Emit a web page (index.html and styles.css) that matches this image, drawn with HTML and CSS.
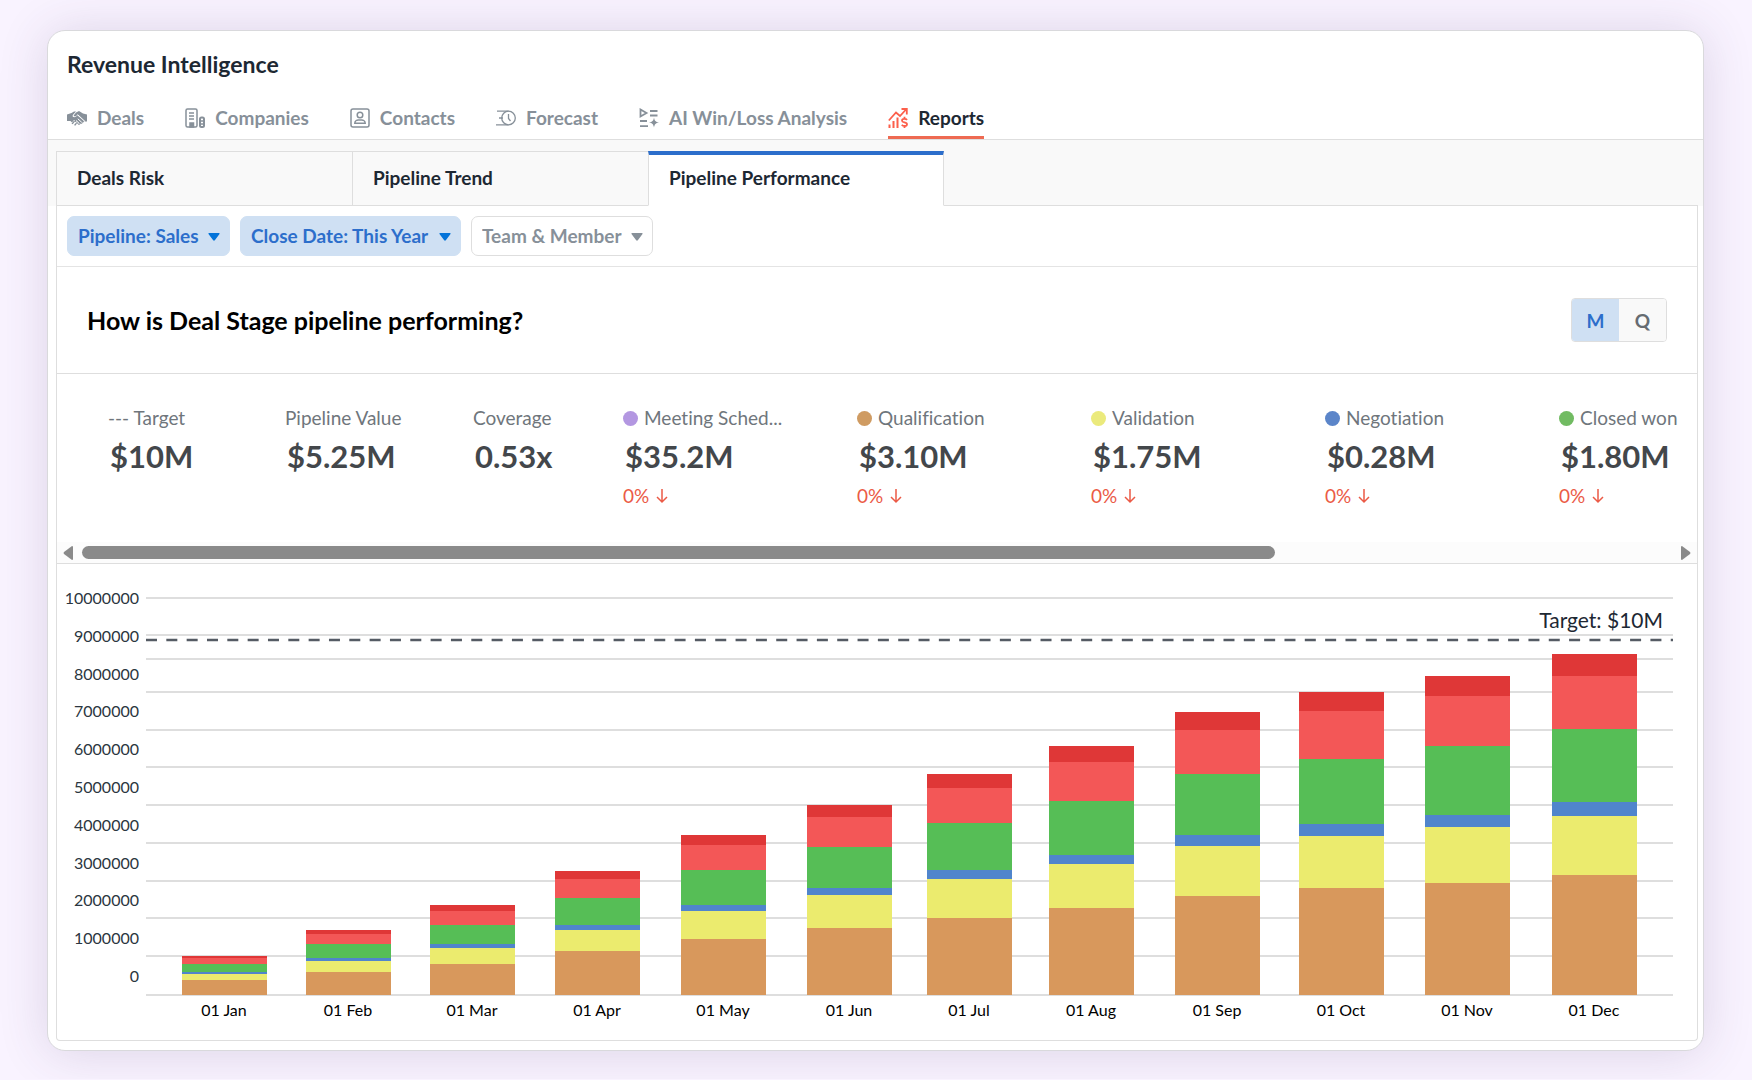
FILE: index.html
```html
<!DOCTYPE html>
<html lang="en">
<head>
	<meta charset="UTF-8">
	<meta name="viewport" content="width=device-width, initial-scale=1.0">
	<title>Revenue Intelligence</title>
	<link rel="stylesheet" href="styles.css">
</head>
<body>
	<main class="card">
		<header class="header">
			<h1>Revenue Intelligence</h1>
			<nav class="nav">
				<a href="#deals">
					<svg class="icon" viewBox="0 0 20 20">
						<path fill="currentColor" d="M0 6.500 4.500 5 7 3.500h2L5.800 7c-.8 1.800 1.200 3 2.800 1.800l2-1.300 6 5.200c.9 1-.2 2.200-1.300 1.500.5 1.200-.8 2.200-2 1.300.1 1.200-1.300 1.800-2.300.9L7.500 13 5 14.500 3.500 13H0z"/>
						<path fill="currentColor" d="m9 4.500 3-1.500 4 2.500 4 1v7h-2.500L11 7 8.200 8.200c-1.200.4-1.800-.4-1.200-1.200z"/>
						<path stroke="#fff" d="m5 15 2.500-3M7.200 16.500l2.300-2.800M9.500 17.500l1.500-2M10.800 10.800l4 3.600M9 12.500l3.500 3.200M10.500 6.500l7.500 7"/>
						<path fill="currentColor" d="M4.500 15.500 7 12.800l1 .8-2.300 2.700zM7 17l2-2.200 1 .8-1.800 2.100z"/>
					</svg>
					Deals
				</a>
				<a href="#companies">
					<svg class="icon" viewBox="0 0 20 20" fill="none" stroke="currentColor" stroke-width="1.500">
						<rect x="1" y="1" width="11" height="18" rx="1.500"/>
						<path d="M4 5h5M4 8h5M4 11h5"/>
						<path fill="currentColor" d="M5 15h3.500v4H5z"/>
						<rect x="15" y="9.500" width="4" height="9.500" rx="1.500" stroke-width="2"/>
						<path d="M15 13h4M15 16h4"/>
					</svg>
					Companies
				</a>
				<a href="#contacts">
					<svg class="icon" viewBox="0 0 20 20" fill="none" stroke="currentColor" stroke-width="1.500">
						<rect x="1" y="1" width="18" height="18" rx="2"/>
						<circle cx="10" cy="7" r="2.800"/>
						<path d="M4.800 15.200c0-2.200 2-3.200 3.500-3.200h3.400c1.500 0 3.500 1 3.500 3.200z"/>
					</svg>
					Contacts
				</a>
				<a href="#forecast">
					<svg class="icon" viewBox="0 0 20 20" fill="none" stroke="currentColor" stroke-width="1.300">
						<circle cx="12.500" cy="10" r="6.800"/>
						<path d="M1 3.200h11.500M3 10h4M0 16.800h12.500M12.500 6v4.500l2 2.500"/>
					</svg>
					Forecast
				</a>
				<a href="#analysis">
					<svg class="icon" viewBox="0 0 20 20" fill="none" stroke="currentColor" stroke-width="1.800">
						<path d="M1.500 1.500v7l6-3.500zM11 3h7.500M11 7.500h7.500M1 13h7M1 18.200h8"/>
						<path fill="currentColor" stroke="none" d="M15 9.500c.7 3.500 1.500 4.400 5 5-3.500.7-4.300 1.600-5 5-.7-3.400-1.500-4.300-5-5 3.500-.6 4.300-1.500 5-5z"/>
					</svg>
					AI Win/Loss Analysis
				</a>
				<a href="#reports" class="active">
					<svg class="icon" viewBox="0 0 20 20" fill="none" stroke="currentColor" stroke-width="1.800">
						<path d="m.8 12.500 7.200-8 4 3.500 6-6.500M13.500 1h5.300v5.500"/>
						<path stroke-width="2" d="M1.500 16.500V20M5.500 13v7M9.500 9.500V20"/>
						<path d="M19 12c-1-1.500-5-1.500-5 .7s5 1.200 5 3.500-4 2.300-5.200.5M16.500 8.800v2M16.500 18v2.200"/>
					</svg>
					Reports
				</a>
			</nav>
		</header>

		<div class="tabs">
			<button type="button" class="tab">Deals Risk</button>
			<button type="button" class="tab">Pipeline Trend</button>
			<button type="button" class="tab selected">Pipeline Performance</button>
		</div>

		<div class="panel">
			<div class="filters">
				<div class="filter on">
					<select aria-label="Pipeline"><option>Pipeline: Sales</option></select>
					<svg class="caret" viewBox="0 0 12 8"><path fill="currentColor" d="M1 0h10q1 0 .5 1L7 7q-1 1.500-2 0L.5 1Q0 0 1 0z"/></svg>
				</div>
				<div class="filter on">
					<select aria-label="Close date"><option>Close Date: This Year</option></select>
					<svg class="caret" viewBox="0 0 12 8"><path fill="currentColor" d="M1 0h10q1 0 .5 1L7 7q-1 1.500-2 0L.5 1Q0 0 1 0z"/></svg>
				</div>
				<div class="filter">
					<select aria-label="Team and member"><option>Team &amp; Member</option></select>
					<svg class="caret" viewBox="0 0 12 8"><path fill="currentColor" d="M1 0h10q1 0 .5 1L7 7q-1 1.500-2 0L.5 1Q0 0 1 0z"/></svg>
				</div>
			</div>

			<div class="question">
				<h2>How is Deal Stage pipeline performing?</h2>
				<div class="toggle">
					<button type="button" class="on">M</button>
					<button type="button">Q</button>
				</div>
			</div>

			<div class="metrics">
				<div class="metric target">
					<div class="label">--- Target</div>
					<div class="value">$10M</div>
				</div>
				<div class="metric total">
					<div class="label">Pipeline Value</div>
					<div class="value">$5.25M</div>
				</div>
				<div class="metric coverage">
					<div class="label">Coverage</div>
					<div class="value">0.53x</div>
				</div>
				<div class="metric">
					<div class="label"><span class="dot purple"></span>Meeting Sched...</div>
					<div class="value">$35.2M</div>
					<div class="change">0% <svg viewBox="0 0 12 16"><path d="M6 1v13M1 9l5 5 5-5"/></svg></div>
				</div>
				<div class="metric">
					<div class="label"><span class="dot orange"></span>Qualification</div>
					<div class="value">$3.10M</div>
					<div class="change">0% <svg viewBox="0 0 12 16"><path d="M6 1v13M1 9l5 5 5-5"/></svg></div>
				</div>
				<div class="metric">
					<div class="label"><span class="dot yellow"></span>Validation</div>
					<div class="value">$1.75M</div>
					<div class="change">0% <svg viewBox="0 0 12 16"><path d="M6 1v13M1 9l5 5 5-5"/></svg></div>
				</div>
				<div class="metric">
					<div class="label"><span class="dot blue"></span>Negotiation</div>
					<div class="value">$0.28M</div>
					<div class="change">0% <svg viewBox="0 0 12 16"><path d="M6 1v13M1 9l5 5 5-5"/></svg></div>
				</div>
				<div class="metric">
					<div class="label"><span class="dot green"></span>Closed won</div>
					<div class="value">$1.80M</div>
					<div class="change">0% <svg viewBox="0 0 12 16"><path d="M6 1v13M1 9l5 5 5-5"/></svg></div>
				</div>
			</div>

			<div class="scrollbar">
				<svg viewBox="0 0 10 14"><path d="M9 0q1 0 1 1v12q0 1-1 1L1 8Q0 7 1 6z"/></svg>
				<div class="track"><div class="thumb"></div></div>
				<svg viewBox="0 0 10 14"><path d="M1 0Q0 0 0 1v12q0 1 1 1l8-6q1-1 0-2z"/></svg>
			</div>

			<svg class="chart" id="chart" viewBox="0 0 1640 476" role="img" aria-label="Pipeline by month"></svg>
		</div>
	</main>

	<script src="chart.js"></script>
</body>
</html>
```

FILE: styles.css
```css
* {
	box-sizing: border-box;
}

body {
	margin: 0;
	padding: 30px 48px 28px 47px;
	background: #f9f3ff;
	font-family: Lato, "Liberation Sans", sans-serif;
	font-variant-ligatures: none;
	color: #1d2833;
}

.card {
	background: #fff;
	border: 1px solid #d9d9dc;
	border-radius: 18px;
	box-shadow: 0 2px 50px rgba(70, 50, 100, 0.16);
	padding-bottom: 9px;
}

.header {
	padding: 18px 19px 0;
	border-bottom: 1px solid #dedede;
}

h1 {
	margin: 0;
	font-size: 23px;
	line-height: 30px;
	font-weight: 700;
}

.nav {
	display: flex;
	gap: 41px;
	margin-top: 20px;
}

.nav a {
	display: flex;
	align-items: center;
	gap: 10px;
	height: 40px;
	font-size: 19px;
	font-weight: 700;
	color: #879099;
	text-decoration: none;
	border-bottom: 3px solid transparent;
}

.nav a.active {
	color: #1d2833;
	border-color: #ee6a52;
}

.icon {
	width: 20px;
	height: 20px;
}

.active .icon {
	color: #fc5f4b;
}

.tabs {
	display: flex;
	padding: 11px 5px 0 8px;
	background: #f9f9f9;
}

.tabs::after {
	content: "";
	flex: 1;
	border-bottom: 1px solid #dedede;
}

.tab {
	width: 296px;
	height: 55px;
	padding: 0 20px 2px;
	font: 700 19px Lato, "Liberation Sans", sans-serif;
	font-variant-ligatures: none;
	color: #1d2833;
	text-align: left;
	background: #f9f9f9;
	border: 1px solid #dedede;
	border-right: none;
	cursor: pointer;
}

.tab.selected {
	background: #fff;
	border-top: 4px solid #2c6ecb;
	border-right: 1px solid #dedede;
	border-bottom-color: #fff;
	padding-bottom: 5px;
}

.panel {
	margin: 0 5px 0 8px;
	border: 1px solid #dedede;
	border-top: none;
	border-radius: 0 0 4px 4px;
}

.filters {
	display: flex;
	gap: 10px;
	padding: 10px;
	border-bottom: 1px solid #e4e4e4;
}

.filter {
	position: relative;
	color: #879099;
}

.filter select {
	appearance: none;
	height: 40px;
	padding: 0 30px 2px 10px;
	font: 700 19px Lato, "Liberation Sans", sans-serif;
	font-variant-ligatures: none;
	color: inherit;
	background: #fff;
	border: 1px solid #dedede;
	border-radius: 7px;
}

.filter.on {
	color: #2c6ecb;
}

.filter.on select {
	background: #cfe0f3;
	border-color: #cfe0f3;
}

.caret {
	position: absolute;
	right: 10px;
	top: 17px;
	width: 12px;
	height: 8px;
	pointer-events: none;
}

.filter.on .caret {
	color: #0273d9;
}

.question {
	display: flex;
	align-items: center;
	justify-content: space-between;
	padding: 31px 30px;
	border-bottom: 1px solid #dedede;
}

h2 {
	margin: 0;
	font-size: 25px;
	line-height: 32px;
	font-weight: 700;
	color: #000;
}

.toggle {
	display: flex;
	border: 1px solid #dedede;
	border-radius: 4px;
	overflow: hidden;
}

.toggle button {
	width: 47px;
	height: 42px;
	padding: 0;
	font: 700 19px Lato, "Liberation Sans", sans-serif;
	color: #666c72;
	background: #f9f9f9;
	border: none;
	cursor: pointer;
}

.toggle .on {
	color: #2c6ecb;
	background: #cfe0f3;
}

.metrics {
	display: flex;
	height: 168px;
	padding: 31px 0 0 51px;
	overflow: hidden;
}

.metric {
	flex: 0 0 234px;
}

.metric.target {
	flex-basis: 177px;
}

.metric.total {
	flex-basis: 188px;
}

.metric.coverage {
	flex-basis: 150px;
}

.label {
	display: flex;
	align-items: center;
	gap: 6px;
	font-size: 19px;
	line-height: 26px;
	color: #6f767c;
}

.value {
	padding-left: 2px;
	margin-bottom: 2px;
	font-size: 31px;
	line-height: 50px;
	font-weight: 700;
	color: #43474b;
}

.change {
	display: flex;
	align-items: center;
	gap: 7px;
	font-size: 19px;
	line-height: 26px;
	color: #eb5a46;
}

.change svg {
	width: 12px;
	height: 16px;
	fill: none;
	stroke: currentColor;
	stroke-width: 1.5;
}

.dot {
	width: 15px;
	height: 15px;
	border-radius: 50%;
}

.purple { background: #b397e1; }
.orange { background: #cf9b62; }
.yellow { background: #ebea7c; }
.blue { background: #5b85c9; }
.green { background: #71bb62; }

.scrollbar {
	display: flex;
	align-items: center;
	gap: 9px;
	height: 22px;
	padding: 0 6px;
	background: #fcfcfc;
	border-bottom: 1px solid #dedede;
}

.scrollbar svg {
	width: 10px;
	height: 14px;
	fill: #8a8a8a;
}

.track {
	flex: 1;
}

.thumb {
	width: 75%;
	height: 13px;
	border-radius: 7px;
	background: #8a8a8a;
}

.chart {
	display: block;
	width: 100%;
}

.grid {
	stroke: #dedede;
	stroke-width: 2;
}

.target-line {
	stroke: #555b64;
	stroke-width: 2.5;
	stroke-dasharray: 11 9.33;
}

.target-text {
	font-size: 21px;
	text-anchor: end;
	fill: #1d2833;
}

.y-text {
	font-size: 16px;
	text-anchor: end;
	fill: #2b3640;
}

.x-text {
	font-size: 16px;
	text-anchor: middle;
	fill: #000;
}
```

FILE: chart.js
```js
const chart = document.getElementById('chart');
const colors = ['#d8985c', '#ebeb6e', '#5085cc', '#56be56', '#f35757', '#df3737'];
const gridLines = [34, 71, 95, 128, 166, 203, 241, 279, 317, 354, 392, 431];
const base = 431;

// month, left edge, segment heights from the bottom up
const months = [
	['01 Jan', 125, [15, 6, 2, 8, 6, 2]],
	['01 Feb', 249, [23, 11, 3, 14, 10, 4]],
	['01 Mar', 373, [31, 16, 4, 19, 14, 6]],
	['01 Apr', 498, [44, 21, 5, 27, 19, 8]],
	['01 May', 624, [56, 28, 6, 35, 25, 10]],
	['01 Jun', 750, [67, 33, 7, 41, 30, 12]],
	['01 Jul', 870, [77, 39, 9, 47, 35, 14]],
	['01 Aug', 992, [87, 44, 9, 54, 39, 16]],
	['01 Sep', 1118, [99, 50, 11, 61, 44, 18]],
	['01 Oct', 1242, [107, 52, 12, 65, 48, 19]],
	['01 Nov', 1368, [112, 56, 12, 69, 50, 20]],
	['01 Dec', 1495, [120, 59, 14, 73, 53, 22]]
];

function add(tag, attrs, text) {
	const el = document.createElementNS('http://www.w3.org/2000/svg', tag);
	for (const key in attrs) {
		el.setAttribute(key, attrs[key]);
	}
	if (text) {
		el.textContent = text;
	}
	chart.appendChild(el);
}

gridLines.forEach(y => add('line', { class: 'grid', x1: 89, x2: 1616, y1: y, y2: y }));

for (let i = 0; i <= 10; i++) {
	add('text', { class: 'y-text', x: 82, y: 40 + Math.round((10 - i) * 37.8) }, String(i * 1000000));
}

add('line', { class: 'target-line', x1: 89, x2: 1616, y1: 76, y2: 76 });
add('text', { class: 'target-text', x: 1606, y: 64 }, 'Target: $10M');

months.forEach(([name, x, parts]) => {
	let y = base;
	parts.forEach((height, i) => {
		y -= height;
		add('rect', { x: x, y: y, width: 85, height: height, fill: colors[i] });
	});
	add('text', { class: 'x-text', x: x + 42, y: 452 }, name);
});
```
